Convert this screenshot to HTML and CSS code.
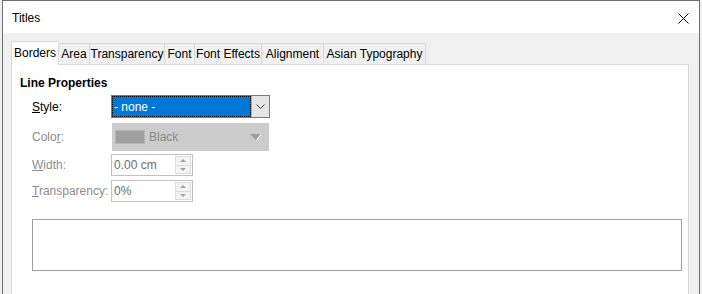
FILE: index.html
```html
<!DOCTYPE html>
<html lang="en">
<head>
  <meta charset="UTF-8" />
  <title>Titles</title>
  <link rel="stylesheet" href="styles.css">
</head>
<body>
  <div class="window">
    <div class="titlebar">
      <span class="title">Titles</span>
      <svg class="close" width="11" height="11" viewBox="0 0 11 11">
        <path d="M0.5 0.5 L10.5 10.5 M10.5 0.5 L0.5 10.5" stroke="#000" stroke-width="1" fill="none" />
      </svg>
    </div>

    <div class="dialog">
      <!-- tabs -->
      <div class="tabs">
        <div class="tab active" style="width: 47px">Borders</div>
        <div class="tab" style="width: 31px">Area</div>
        <div class="tab" style="width: 75px">Transparency</div>
        <div class="tab" style="width: 30px">Font</div>
        <div class="tab" style="width: 67px">Font Effects</div>
        <div class="tab" style="width: 62px">Alignment</div>
        <div class="tab last" style="width: 101px">Asian Typography</div>
      </div>

      <div class="panel">
        <div class="heading">Line Properties</div>

        <div class="form">
          <div class="row row-style">
            <label><u>S</u>tyle:</label>
            <div class="select">
              <div class="select-value"><span>- none -</span></div>
              <div class="select-btn">
                <svg width="9" height="5" viewBox="0 0 9 5">
                  <path d="M0.5 0.5 L4.5 4.5 L8.5 0.5" stroke="#444" fill="none" />
                </svg>
              </div>
            </div>
          </div>

          <div class="row row-color">
            <label class="off">Colo<u>r</u>:</label>
            <div class="colorbox">
              <span class="swatch"></span>
              <span class="colorname">Black</span>
              <svg class="tri" width="11" height="6" viewBox="0 0 11 6">
                <path d="M0 0 L11 0 L5.5 6 Z" fill="#9c9c9c" />
                <path d="M11 0 L7 6" stroke="#fff" stroke-width="1" />
              </svg>
            </div>
          </div>

          <div class="row row-spin">
            <label class="off"><u>W</u>idth:</label>
            <div class="spin">
              <span class="spin-text">0.00 cm</span>
              <div class="spin-btns">
                <div class="spin-up"><span class="up"></span></div>
                <div class="spin-down"><span class="down"></span></div>
              </div>
            </div>
          </div>

          <div class="row row-spin">
            <label class="off"><u>T</u>ransparency:</label>
            <div class="spin">
              <span class="spin-text">0%</span>
              <div class="spin-btns">
                <div class="spin-up"><span class="up"></span></div>
                <div class="spin-down"><span class="down"></span></div>
              </div>
            </div>
          </div>
        </div>

        <div class="preview"></div>
      </div>
    </div>
  </div>
</body>
</html>
```

FILE: styles.css
```css
body {
  margin: 0;
  background: #f0f0f0;
  font-family: 'Liberation Sans', Arial, sans-serif;
  font-size: 12px;
  color: #000;
  overflow: hidden;
}
.window {
  margin-left: 2px;
  width: 696px;
  height: 300px;
  border: 1px solid #6e6e6e;
  border-bottom: none;
  background: #f0f0f0;
}
.titlebar {
  height: 32px;
  background: #fff;
  display: flex;
  align-items: center;
  justify-content: space-between;
  padding: 0 10px 0 9px;
}
.title {
  font-size: 12px;
  margin-top: 1px;
}
.close {
  display: block;
  margin-top: 2px;
}
.dialog {
  padding: 8px 10px 0 8px;
}
.tabs {
  display: flex;
  align-items: flex-end;
  height: 23px;
}
.tab {
  box-sizing: border-box;
  height: 21px;
  border-top: 1px solid #d9d9d9;
  border-left: 1px solid #d9d9d9;
  background: #f0f0f0;
  text-align: center;
  line-height: 21px;
  white-space: nowrap;
}
.tab.last {
  border-right: 1px solid #d9d9d9;
  box-sizing: content-box;
  width: 101px;
  height: 20px;
}
.tab.active {
  height: 24px;
  margin-bottom: -1px;
  background: #fff;
  line-height: 22px;
  position: relative;
  z-index: 1;
}
.panel {
  box-sizing: border-box;
  height: 240px;
  background: #fff;
  border: 1px solid #d9d9d9;
  padding: 10px 5px 0 8px;
}
.heading {
  font-weight: bold;
  line-height: 16px;
}
.form {
  margin-top: 4px;
  padding-left: 12px;
  display: flex;
  flex-direction: column;
}
.row {
  display: flex;
  align-items: center;
}
.row label {
  width: 79px;
  flex: none;
}
.row label.off {
  color: #8d8d8d;
}
.row-color {
  margin-top: 5px;
}
.row-spin {
  margin-top: 3px;
}
.row-spin + .row-spin {
  margin-top: 4px;
}

/* style dropdown */
.select {
  display: flex;
  width: 159px;
  height: 23px;
  box-sizing: border-box;
  border: 1px solid #7a7a7a;
}
.select-value {
  flex: 1;
  background: #0078d7;
  color: #fff;
  outline: 1px dotted #000;
  outline-offset: -1px;
  display: flex;
  align-items: center;
  padding-left: 2px;
}
.select-btn {
  width: 17px;
  background: #e5e5e5;
  border-left: 1px solid #adadad;
  display: flex;
  align-items: center;
  justify-content: center;
}

/* color dropdown */
.colorbox {
  margin-left: 1px;
  width: 157px;
  height: 28px;
  background: #cccccc;
  display: flex;
  align-items: center;
  padding-left: 3px;
  box-sizing: border-box;
}
.swatch {
  width: 28px;
  height: 12px;
  background: #a0a0a0;
  border: 1px solid #b6b6b6;
}
.colorname {
  margin-left: 4px;
  color: #8a8a8a;
  flex: 1;
}
.tri {
  margin-right: 8px;
}

/* spin fields */
.spin {
  width: 82px;
  height: 22px;
  box-sizing: border-box;
  border: 1px solid #c2c2c2;
  display: flex;
  align-items: center;
  justify-content: space-between;
}
.spin-text {
  padding-left: 2px;
  color: #6d6d6d;
}
.spin-btns {
  width: 16px;
  height: 18px;
  margin-right: 1px;
  display: flex;
  flex-direction: column;
}
.spin-up, .spin-down {
  flex: 1;
  box-sizing: border-box;
  border: 1px solid #dcdcdc;
  background: #f4f4f4;
  display: flex;
  align-items: center;
  justify-content: center;
}
.spin-down {
  border-top: none;
}
.up, .down {
  width: 0;
  height: 0;
  border-left: 3px solid transparent;
  border-right: 3px solid transparent;
}
.up {
  border-bottom: 3px solid #a0a0a0;
}
.down {
  border-top: 3px solid #a0a0a0;
}

.preview {
  margin: 17px 0 0 12px;
  width: 650px;
  height: 52px;
  box-sizing: border-box;
  border: 1px solid #a0a0a0;
}
```
